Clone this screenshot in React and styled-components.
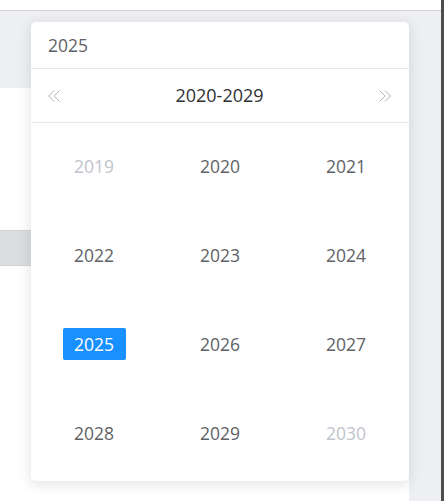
import React from 'react';
import styled, { createGlobalStyle } from 'styled-components';

const GlobalStyle = createGlobalStyle`
  body {
    margin: 0;
    font-family: 'Open Sans', 'Noto Sans', sans-serif;
  }
`;

const years = [2019, 2020, 2021, 2022, 2023, 2024, 2025, 2026, 2027, 2028, 2029, 2030];
const selected = 2025;

const DoubleArrow = ({ dir }) => (
  <svg width="14" height="12" viewBox="0 0 14 12" fill="none" stroke="#b0b3b9" strokeWidth="1">
    {dir === 'left' ? (
      <>
        <path d="M7 0.5 L1.5 6 L7 11.5" />
        <path d="M12.5 0.5 L7 6 L12.5 11.5" />
      </>
    ) : (
      <>
        <path d="M1.5 0.5 L7 6 L1.5 11.5" />
        <path d="M7 0.5 L12.5 6 L7 11.5" />
      </>
    )}
  </svg>
);

const App = () => {
  return (
    <Page>
      <GlobalStyle />
      <Main>
        <TopBar />
        <Body>
          <Content>
            <Spacer />
            <WhiteCard />
            <Band />
            <WhiteFill />
          </Content>
        </Body>
        <Picker>
          <InputRow>2025</InputRow>
          <NavRow>
            <ArrowBtn>
              <DoubleArrow dir="left" />
            </ArrowBtn>
            <Title>2020-2029</Title>
            <ArrowBtn>
              <DoubleArrow dir="right" />
            </ArrowBtn>
          </NavRow>
          <Grid>
            {years.map((y) => (
              <Cell key={y}>
                <Year $muted={y < 2020 || y > 2029} $active={y === selected}>
                  {y}
                </Year>
              </Cell>
            ))}
          </Grid>
        </Picker>
      </Main>
      <ScrollLine />
      <Edge />
    </Page>
  );
};

const Page = styled.div`
  display: flex;
  width: 445px;
  height: 501px;
  overflow: hidden;
`;

const Main = styled.div`
  position: relative;
  flex: 1;
  display: flex;
  flex-direction: column;
  background: #eeeff3;
`;

const TopBar = styled.div`
  height: 10px;
  background: #fff;
  border-bottom: 1px solid #d3d4d8;
`;

const Body = styled.div`
  flex: 1;
  display: flex;
`;

const Content = styled.div`
  width: 409px;
  display: flex;
  flex-direction: column;
`;

const Spacer = styled.div`
  height: 77px;
`;

const WhiteCard = styled.div`
  height: 142px;
  background: #fff;
`;

const Band = styled.div`
  height: 34px;
  background: #dcdde1;
  border-top: 1px solid #d2d3d7;
  border-bottom: 1px solid #d2d3d7;
`;

const WhiteFill = styled.div`
  flex: 1;
  background: #fff;
`;

const ScrollLine = styled.div`
  width: 3px;
  background: #4d4d50;
`;

const Edge = styled.div`
  width: 1px;
  background: #fff;
`;

const Picker = styled.div`
  position: absolute;
  left: 31px;
  top: 22px;
  width: 378px;
  height: 459px;
  background: #fff;
  border-radius: 5px;
  box-shadow: 0 3px 14px rgba(0, 0, 0, 0.12);
  display: flex;
  flex-direction: column;
`;

const InputRow = styled.div`
  height: 46px;
  display: flex;
  align-items: center;
  padding-left: 17px;
  font-size: 17.5px;
  color: #606266;
  border-bottom: 1px solid #e6e7ea;
`;

const NavRow = styled.div`
  height: 53px;
  display: flex;
  align-items: center;
  justify-content: space-between;
  padding: 0 17px 0 16px;
  border-bottom: 1px solid #e6e7ea;
`;

const ArrowBtn = styled.span`
  display: flex;
  align-items: center;
  padding-top: 1px;
`;

const Title = styled.span`
  font-size: 18px;
  color: #303133;
  padding-bottom: 2px;
`;

const Grid = styled.div`
  flex: 1;
  display: grid;
  grid-template-columns: repeat(3, 1fr);
  grid-template-rows: repeat(4, 1fr);
  padding: 0 0 2px;
`;

const Cell = styled.div`
  display: flex;
  align-items: center;
  justify-content: center;
  padding-bottom: 4px;
`;

const Year = styled.span`
  display: flex;
  align-items: center;
  justify-content: center;
  width: 63px;
  height: 32px;
  border-radius: 2px;
  font-size: 17.5px;
  color: ${(p) => (p.$active ? '#fff' : p.$muted ? '#c0c4cc' : '#606266')};
  background: ${(p) => (p.$active ? '#1890ff' : 'transparent')};
`;

export default App;
